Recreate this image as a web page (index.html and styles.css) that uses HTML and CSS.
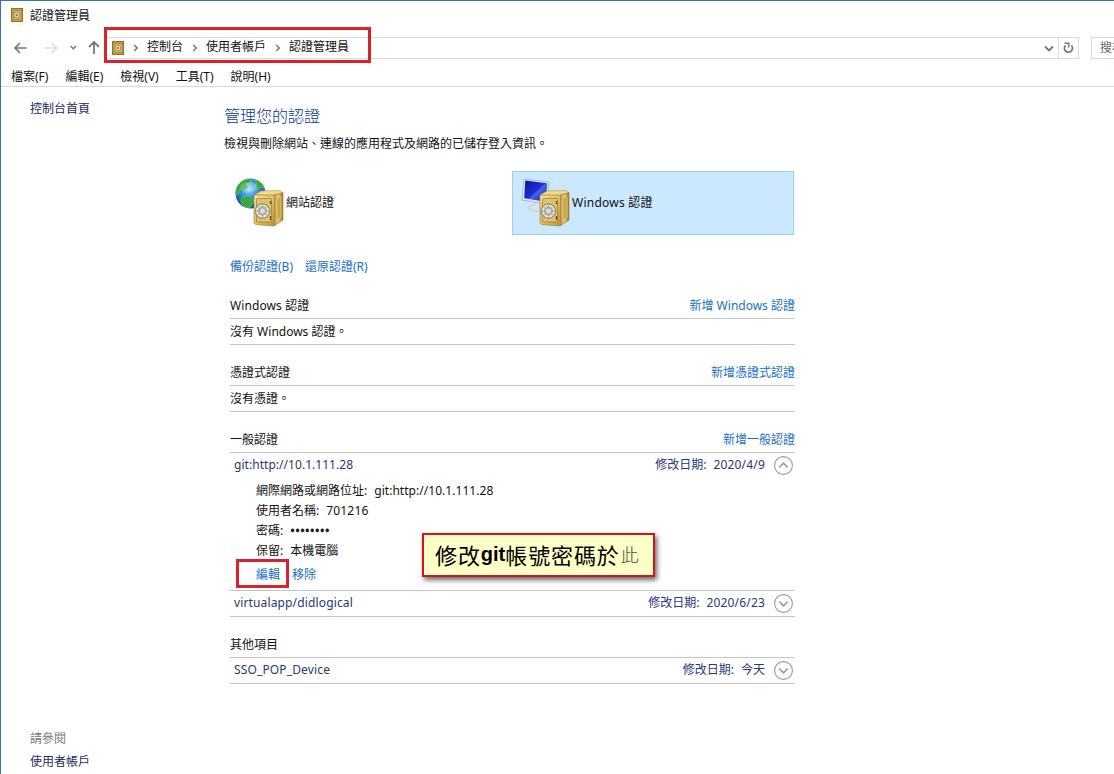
FILE: index.html
```
<!DOCTYPE html>
<html lang="zh-Hant">
<head>
<meta charset="utf-8">
<title>認證管理員</title>
<link rel="stylesheet" href="styles.css">
</head>
<body>
<svg class="defs" width="0" height="0" aria-hidden="true">
  <defs>
    <linearGradient id="gold" x1="0" y1="0" x2="1" y2="1"><stop offset="0" stop-color="#f6e3a0"/><stop offset=".5" stop-color="#dfbf66"/><stop offset="1" stop-color="#b8923a"/></linearGradient>
    <linearGradient id="side" x1="0" y1="0" x2="1" y2="0"><stop offset="0" stop-color="#b8933a"/><stop offset=".45" stop-color="#e3ca7a"/><stop offset="1" stop-color="#a07c2a"/></linearGradient>
    <radialGradient id="sea" cx=".45" cy=".35" r=".65"><stop offset="0" stop-color="#9be4ff"/><stop offset=".45" stop-color="#2f8fdc"/><stop offset="1" stop-color="#123a8c"/></radialGradient>
    <linearGradient id="screen" x1="0" y1="0" x2="1" y2="1"><stop offset="0" stop-color="#0a14a0"/><stop offset=".5" stop-color="#1c2fd0"/><stop offset=".55" stop-color="#4660ea"/><stop offset="1" stop-color="#1020b0"/></linearGradient>
    <symbol id="safe" viewBox="0 0 31 37">
      <path d="M1 5 8 1 27 .5 30 3 22 6z" fill="#f0da8e" stroke="#b8963f" stroke-width=".6"/>
      <path d="M21 5 30 2.500V30L21 36z" fill="url(#side)" stroke="#9a7830" stroke-width=".6"/>
      <path d="M24 8.500 28 7v20l-4 3z" fill="#c9a44a" stroke="#ead384" stroke-width=".6"/>
      <path d="M2 5h18q1.500 0 1.500 1.500V34.500Q21.500 36 20 36L3 34.500Q1 34 1 32V6.500Q1 5 2 5z" fill="url(#gold)" stroke="#a8863a" stroke-width=".7"/>
      <rect x="3.500" y="8.500" width="15" height="23.500" rx="1" fill="#dfc26c" stroke="#9a7a34" stroke-width=".7"/>
      <path d="M17.500 11v3M17.500 26v4" stroke="#5c4210" stroke-width="1.200"/>
      <circle cx="9.500" cy="21" r="7.300" fill="#bcb8aa" stroke="#7e7a70" stroke-width=".8"/>
      <circle cx="9.500" cy="21" r="5.600" fill="none" stroke="#f1f0ea" stroke-width="1.400"/>
      <path d="M9.500 14.500v13M3 21h13M5 16.500l9 9M14 16.500l-9 9" stroke="#8a877e" stroke-width=".7"/>
      <circle cx="9.500" cy="21" r="3" fill="#dedcd2" stroke="#99968c" stroke-width=".6"/>
    </symbol>
    <symbol id="mini-safe" viewBox="0 0 12 14">
      <rect x=".5" y=".5" width="11" height="13" fill="#c69c40" stroke="#987126"/>
      <rect x="2.500" y="2.500" width="7.500" height="9" fill="#d5b35d" stroke="#b28d40" stroke-width=".8"/>
      <circle cx="5.800" cy="7" r="2.900" fill="#e0d8b8" stroke="#97824f" stroke-width=".7"/>
      <circle cx="5.800" cy="7" r="1.200" fill="#8e846a"/>
    </symbol>
    <symbol id="crumb" viewBox="0 0 6 8"><path d="M1.200 1 4.300 4 1.200 7" fill="none" stroke="#777" stroke-width="1.500"/></symbol>
    <symbol id="down" viewBox="0 0 19 19"><circle cx="9.500" cy="9.500" r="8.900" fill="#fff" stroke="#999" stroke-width="1.100"/><path d="M5.300 7.500 9.500 11.800 13.700 7.500" fill="none" stroke="#999" stroke-width="1.600"/></symbol>
  </defs>
</svg>
<div class="window">
  <header class="titlebar"><svg class="mini" width="12" height="14"><use href="#mini-safe"/></svg><span>認證管理員</span></header>
  <nav class="navbar">
    <svg class="arrows" width="86" height="22" viewBox="0 0 86 22" fill="none">
      <path d="M7 11h11.500M12 6l-5 5 5 5" stroke="#777" stroke-width="1.700" transform="translate(7)"/>
      <path d="M44 11h11.500M50.500 6l5 5-5 5" stroke="#ddd" stroke-width="1.600"/>
      <path d="m69.500 9 2.800 2.800L75 9" stroke="#777" stroke-width="1.400" transform="translate(0 0)"/>
    </svg>
    <svg class="up" width="14" height="22" viewBox="0 0 14 22" fill="none"><path d="M7 5v12M2 10l5-5 5 5" stroke="#777" stroke-width="1.800"/></svg>
    <div class="address">
      <div class="path">
        <svg width="12" height="14"><use href="#mini-safe"/></svg>
        <svg class="sep" width="6" height="8"><use href="#crumb"/></svg><span>控制台</span>
        <svg class="sep" width="6" height="8"><use href="#crumb"/></svg><span>使用者帳戶</span>
        <svg class="sep" width="6" height="8"><use href="#crumb"/></svg><span>認證管理員</span>
      </div>
      <svg class="drop" width="10" height="8" viewBox="0 0 10 8"><path d="m1 2.500 4 4 4-4" fill="none" stroke="#777" stroke-width="1.800"/></svg>
      <div class="refresh"><svg width="11" height="12" viewBox="0 0 11 12"><path d="M2.600 3.500A4 4 0 1 0 8.300 3.300" fill="none" stroke="#777" stroke-width="1.800" transform="matrix(-1 0 0 1 11 0)"/><path d="M1.500 1.300h4.200v4.200" fill="none" stroke="#777" stroke-width="1.600"/></svg></div>
    </div>
    <div class="search">搜尋</div>
    <div class="mark mark-path"></div>
  </nav>
  <div class="menubar"><span>檔案(F)</span><span>編輯(E)</span><span>檢視(V)</span><span>工具(T)</span><span>說明(H)</span></div>
  <div class="body">
    <aside class="sidebar">
      <a class="navy">控制台首頁</a>
      <div class="see-also"><div class="muted">請參閱</div><a class="navy">使用者帳戶</a></div>
    </aside>
    <main class="content">
      <h1 class="heading">管理您的認證</h1>
      <p class="intro">檢視與刪除網站、連線的應用程式及網路的已儲存登入資訊。</p>
      <div class="tiles">
        <div class="tile">
          <svg width="50" height="50" viewBox="0 0 50 50">
            <circle cx="15.500" cy="15.500" r="15" fill="url(#sea)"/>
            <path d="M3 7Q9 0 17 1L15 5 11 6 13 9 8 13 5 11 4 15 1 17Q0 11 3 7zM19 1Q28 4 29 10L26 9 22 12 20 8 22 5zM7 19 14 18 19 23 16 29 13 30Q6 28 6 23zM24 14 30 13Q31 19 27 24L23 20z" fill="#38a642" stroke="#6fd35c" stroke-width=".6"/>
            <ellipse cx="14" cy="9" rx="9" ry="5" fill="#fff" opacity=".23"/>
            <use href="#safe" x="18" y="12" width="31" height="37"/>
          </svg><span>網站認證</span>
        </div>
        <div class="tile selected">
          <svg width="50" height="50" viewBox="0 0 50 50">
            <path d="M14 23 20 24 21 28Q27 29 26 32 20 35 10 32 5 30 8 28 11 27 14 27z" fill="#dfe2e8" stroke="#b5bac5" stroke-width=".6"/>
            <path d="m3 1 25 3-2 22-25-4z" fill="#e9edf5" stroke="#9ca9c0" stroke-width=".8"/>
            <path d="m4.300 2.500 22 2.700-1.600 18.500-21.500-3.500z" fill="url(#screen)"/>
            <use href="#safe" x="18" y="12" width="31" height="37"/>
          </svg><span class="tile-latin">Windows 認證</span>
        </div>
      </div>
      <div class="sections">
        <div class="links"><a>備份認證(B)</a><a>還原認證(R)</a></div>
        <section class="group">
          <div class="head"><span class="win">Windows 認證</span><a>新增 Windows 認證</a></div>
          <div class="empty">沒有 Windows 認證。</div>
        </section>
        <section class="group">
          <div class="head"><span>憑證式認證</span><a>新增憑證式認證</a></div>
          <div class="empty">沒有憑證。</div>
        </section>
        <section class="group">
          <div class="head"><span>一般認證</span><a>新增一般認證</a></div>
          <div class="entry open">
            <div class="row"><span class="url">git:http://10.1.111.28</span><span class="date"><span>修改日期:</span><span class="num">2020/4/9</span></span><svg class="flip" width="19" height="19"><use href="#down"/></svg></div>
            <div class="details">
              <div class="field"><span>網際網路或網路位址:</span><span class="url">git:http://10.1.111.28</span></div>
              <div class="field"><span>使用者名稱:</span><span class="num">701216</span></div>
              <div class="field"><span>密碼:</span><span class="dots">••••••••</span></div>
              <div class="field"><span>保留:</span><span>本機電腦</span></div>
              <div class="actions"><a>編輯</a><a>移除</a><div class="mark mark-edit"></div></div>
            </div>
          </div>
          <div class="entry">
            <div class="row"><span class="name">virtualapp/didlogical</span><span class="date"><span>修改日期:</span><span class="num">2020/6/23</span></span><svg width="19" height="19"><use href="#down"/></svg></div>
          </div>
          <div class="callout"><span>修改</span><b>git</b><span>帳號密碼於</span><span class="last">此</span></div>
        </section>
        <section class="group">
          <div class="head"><span>其他項目</span></div>
          <div class="entry">
            <div class="row"><span class="name">SSO_POP_Device</span><span class="date"><span>修改日期:</span><span>今天</span></span><svg width="19" height="19"><use href="#down"/></svg></div>
          </div>
        </section>
      </div>
    </main>
  </div>
</div>
</body>
</html>
```

FILE: styles.css
```
* { box-sizing: border-box; }
body {
  margin: 0;
  background: #fff;
  color: #111;
  font: 12px/20px "Noto Sans", "Noto Sans CJK TC", sans-serif;
  overflow: hidden;
}
svg { display: block; flex: none; }
.defs { position: absolute; }
a { color: #1b70c8; white-space: nowrap; }
a.navy { color: #1c2a60; }
span { white-space: nowrap; }

.window {
  width: 1114px;
  height: 774px;
  display: flex;
  flex-direction: column;
  border-top: 1px solid #3575ad;
  border-left: 1px solid #3575ad;
  overflow: hidden;
}
.titlebar { height: 36px; padding: 5px 0 0 10px; display: flex; gap: 7px; }
.titlebar .mini { margin-top: 2px; }
.navbar { height: 22px; display: flex; position: relative; flex: none; }
.arrows { margin-right: 0; }
.up { margin: 0 5px 0 0; }
.address { width: 973px; border: 1px solid #d9d9d9; display: flex; align-items: center; flex: none; }
.path { display: flex; align-items: center; flex: 1; padding-left: 5px; }
.path .sep { margin: 0 8px 0 9px; }
.path span { margin-top: -2px; }
.drop { margin-right: 4px; }
.refresh { width: 20px; height: 20px; border-left: 1px solid #d9d9d9; display: grid; place-items: center; }
.search { margin-left: 12px; width: 40px; flex: none; border: 1px solid #d9d9d9; border-right: 0; padding-left: 8px; line-height: 19px; color: #666; white-space: nowrap; }
.mark { position: absolute; border: 3px solid #d8232d; }
.mark-path { left: 103px; top: -10px; width: 267px; height: 36px; }
.menubar { height: 28px; flex: none; padding: 8px 0 0 10px; border-bottom: 1px solid #d9d9d9; display: flex; gap: 17px; }

.body { display: flex; flex: 1; }
.sidebar { width: 223px; padding: 12px 0 2px 29px; display: flex; flex-direction: column; justify-content: space-between; }
.see-also { display: grid; gap: 3px; }
.muted { color: #777; }
.content { width: 572px; padding-top: 17px; }
.heading { margin: 0; font-size: 16px; line-height: 24px; font-weight: 300; color: #0a3590; }
.intro { margin: 6px 0 17px; height: 20px; white-space: nowrap; }
.tiles { display: grid; grid-template-columns: 282px 282px; height: 64px; padding-left: 6px; }
.tile { display: flex; align-items: center; height: 64px; padding-left: 5px; }
.tile.selected { background: #cce8ff; border: 1px solid #99d1f0; padding-left: 8px; }
.tile svg { margin-right: 1px; }
.tile-latin { letter-spacing: .25px; }

.sections { margin-left: 6px; width: 565px; padding-top: 22px; }
.links { display: flex; gap: 12px; height: 36px; }
.group { margin-bottom: 15px; position: relative; }
.head { height: 26px; border-bottom: 1px solid #c4c4c4; display: flex; justify-content: space-between; align-items: center; }
.win { letter-spacing: .1px; }
.empty { height: 26px; border-bottom: 1px solid #c4c4c4; padding-top: 3px; }
.entry { border-bottom: 1px solid #c4c4c4; color: #283778; }
.row { height: 25px; padding: 0 2px 0 4px; display: flex; align-items: center; }
.row > span { margin-top: -2px; }
.date { margin-left: auto; margin-right: 9px; display: flex; gap: 7px; }
.url { letter-spacing: .04px; }
.num { letter-spacing: .18px; }
.name { letter-spacing: .14px; }
.flip { transform: scaleY(-1); }
.details { padding: 3px 0 4px 26px; height: 112px; color: #111; }
.field { display: flex; gap: 7px; height: 20px; }
.dots { letter-spacing: .45px; -webkit-text-stroke: .5px #111; }
.actions { display: flex; gap: 12px; margin-top: 4px; position: relative; }
.mark-edit { left: -20px; top: -6px; width: 53px; height: 29px; }
.callout {
  position: absolute;
  left: 192px;
  top: 106px;
  width: 233px;
  height: 44px;
  display: flex;
  align-items: center;
  padding: 0 0 3px 11px;
  border: 2px solid #d0141c;
  background: #ffffc8;
  box-shadow: 2px 3px 5px rgba(0, 0, 0, .6);
  color: #000;
  font: 400 22px/36px "Noto Sans CJK TC", sans-serif;
  letter-spacing: .9px;
}
.callout b { font: bold 20px/36px "Liberation Sans", sans-serif; letter-spacing: 0; }
.callout .last { margin-left: 1px; font-size: 18px; font-weight: 300; color: #45513a; letter-spacing: 0; }
```
